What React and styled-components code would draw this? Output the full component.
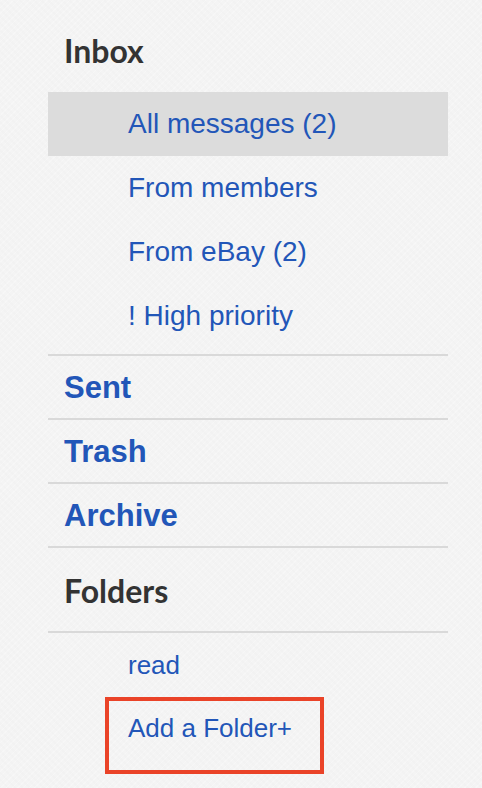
import React from "react";
import styled, { createGlobalStyle } from "styled-components";

const GlobalStyle = createGlobalStyle`
  html, body {
    margin: 0;
    padding: 0;
    background: #f4f4f4;
  }
  body {
    font-family: "Liberation Sans", Arial, sans-serif;
    -webkit-font-smoothing: antialiased;
  }
`;

const Page = styled.div`
  min-height: 788px;
  background-color: #f4f4f4;
  background-image:
    repeating-linear-gradient(45deg, rgba(0,0,0,0.008) 0 2px, transparent 2px 5px),
    repeating-linear-gradient(-45deg, rgba(255,255,255,0.25) 0 1px, transparent 1px 4px);
`;

const Sidebar = styled.nav`
  width: 400px;
  margin-left: 48px;
  padding-top: 19px;
  display: flex;
  flex-direction: column;
`;

const SectionHeading = styled.h2`
  margin: 0;
  padding: ${(p) => p.$top || 0}px 0 ${(p) => p.$bottom || 0}px 16px;
  font-family: Lato, "Open Sans", sans-serif;
  font-weight: 700;
  font-size: 32px;
  line-height: 64px;
  color: #333333;
  border-bottom: ${(p) => (p.$divider ? "2px solid #d9d9d9" : "none")};
`;

const SubList = styled.ul`
  list-style: none;
  margin: 0;
  padding: 0 0 ${(p) => p.$bottom || 0}px 0;
  border-bottom: ${(p) => (p.$divider ? "2px solid #d9d9d9" : "none")};
`;

const SubItem = styled.li`
  height: 64px;
  line-height: 64px;
  padding-left: 80px;
  font-size: ${(p) => p.$size || 28}px;
  color: #2256b8;
  background: ${(p) => (p.$active ? "#dcdcdc" : "transparent")};
  white-space: nowrap;
`;

const MainLink = styled.div`
  height: 60px;
  line-height: 60px;
  padding: 2px 0 0 16px;
  font-weight: 700;
  font-size: 31px;
  color: #2256b8;
  border-bottom: 2px solid #d9d9d9;
`;

const AddFolder = styled.li`
  box-sizing: border-box;
  width: 219px;
  height: 77px;
  margin-left: 57px;
  padding-left: 19px;
  border: 4px solid #ea4328;
  font-size: 26px;
  line-height: 54px;
  color: #2256b8;
  white-space: nowrap;
`;

export default function App() {
  return (
    <>
      <GlobalStyle />
      <Page>
        <Sidebar>
          <SectionHeading $bottom={9}>Inbox</SectionHeading>
          <SubList $bottom={6} $divider>
            <SubItem $active>All messages (2)</SubItem>
            <SubItem>From members</SubItem>
            <SubItem>From eBay (2)</SubItem>
            <SubItem>! High priority</SubItem>
          </SubList>
          <MainLink>Sent</MainLink>
          <MainLink>Trash</MainLink>
          <MainLink>Archive</MainLink>
          <SectionHeading $top={11} $bottom={8} $divider>
            Folders
          </SectionHeading>
          <SubList>
            <SubItem $size={26}>read</SubItem>
            <AddFolder>Add a Folder+</AddFolder>
          </SubList>
        </Sidebar>
      </Page>
    </>
  );
}
